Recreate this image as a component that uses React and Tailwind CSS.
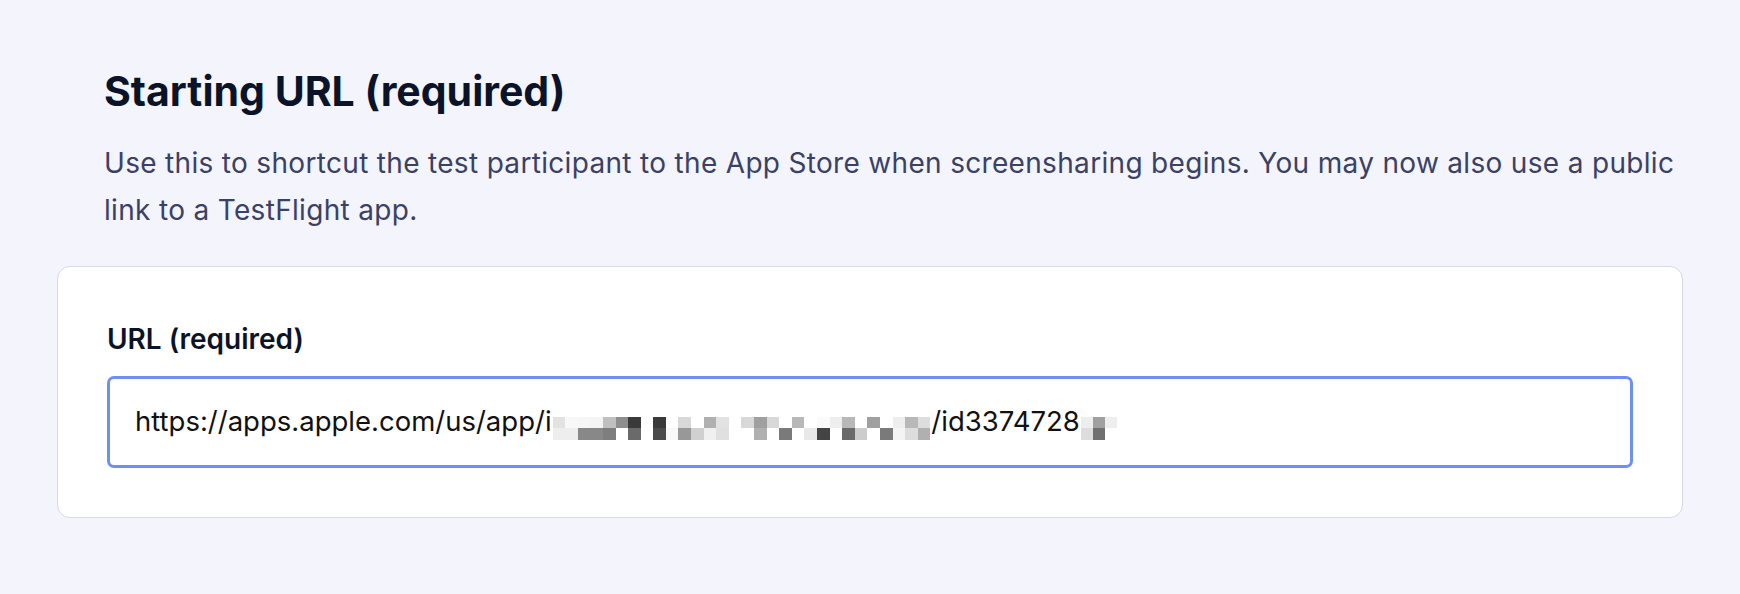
const blurTop = [
  "bg-[#e2e2e2]", "bg-[#f8f8f8]", "bg-[#f6f6f6]", "bg-[#f4f4f4]", "bg-[#c0c0c0]", "bg-[#8e8e8e]", "bg-[#3a3a3a]", "bg-white",
  "bg-[#3a3a3a]", "bg-white", "bg-[#d8d8d8]", "bg-white", "bg-[#b0b0b0]", "bg-[#e2e2e2]", "bg-white", "bg-[#d8d8d8]",
  "bg-[#a0a0a0]", "bg-[#d8d8d8]", "bg-white", "bg-[#b8b8b8]", "bg-white", "bg-[#fafafa]", "bg-[#eeeeee]", "bg-[#b8b8b8]",
  "bg-white", "bg-[#a0a0a0]", "bg-white", "bg-[#eeeeee]", "bg-[#b8b8b8]", "bg-[#dddddd]",
];
const blurBottom = [
  "bg-[#eeeeee]", "bg-[#eeeeee]", "bg-[#888888]", "bg-[#888888]", "bg-[#7e7e7e]", "bg-white", "bg-[#6a6a6a]", "bg-white",
  "bg-[#4a4a4a]", "bg-[#f8f8f8]", "bg-[#989898]", "bg-[#d0d0d0]", "bg-[#f0f0f0]", "bg-[#e0e0e0]", "bg-white", "bg-white",
  "bg-[#b0b0b0]", "bg-white", "bg-[#7a7a7a]", "bg-white", "bg-[#e8e8e8]", "bg-[#444444]", "bg-white", "bg-[#6a6a6a]",
  "bg-[#cccccc]", "bg-white", "bg-[#7a7a7a]", "bg-[#f4f4f4]", "bg-[#dddddd]", "bg-[#b0b0b0]",
];
const tailTop = ["bg-[#eeeeee]", "bg-[#a0a0a0]", "bg-[#eeeeee]"];
const tailBottom = ["bg-[#dddddd]", "bg-[#707070]", "bg-white"];

function Pixels({ top, bottom, cell }) {
  return (
    <span className="mx-[1px] inline-flex flex-col align-[3px]">
      <span className="flex">
        {top.map((c, i) => (
          <span key={i} className={`${cell} ${c}`} />
        ))}
      </span>
      <span className="flex">
        {bottom.map((c, i) => (
          <span key={i} className={`${cell} ${c}`} />
        ))}
      </span>
    </span>
  );
}

export default function App() {
  return (
    <div className="min-h-[594px] w-full bg-[#f3f4fc] px-[57px] pt-[67px] font-['Inter',sans-serif]">
      <div className="pl-[47px]">
        <h2 className="text-[41px] leading-[48px] font-bold text-[#0b1329]">
          Starting URL (required)
        </h2>
        <p className="mt-[25px] text-[28px] leading-[47px] tracking-[0.32px] text-[#3b4164]">
          Use this to shortcut the test participant to the App Store when screensharing begins. You may now also use a public link to a TestFlight app.
        </p>
      </div>
      <div className="mt-[32px] rounded-[13px] border border-[#d6d9e8] bg-white px-[49px] pt-[51px] pb-[49px]">
        <label className="block text-[28px] leading-[42px] font-semibold text-[#0b1329]">
          URL (required)
        </label>
        <div className="mt-[16px] flex h-[92px] items-center rounded-[7px] border-[3px] border-[#6f8ff8] bg-white px-[25px]">
          <span className="whitespace-nowrap text-[27.5px] text-[#111111]">
            https://apps.apple.com/us/app/i
            <Pixels top={blurTop} bottom={blurBottom} cell="h-[11.5px] w-[12.6px]" />
            /id3374728
            <Pixels top={tailTop} bottom={tailBottom} cell="h-[11.5px] w-[12px]" />
          </span>
        </div>
      </div>
    </div>
  );
}
